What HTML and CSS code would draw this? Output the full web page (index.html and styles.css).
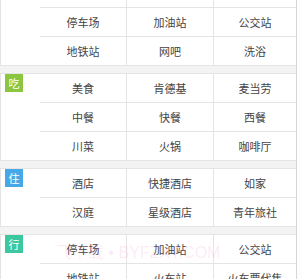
FILE: index.html
```html
<!DOCTYPE html>
<html lang="zh">
<head>
<meta charset="utf-8">
<link rel="stylesheet" href="styles.css">
</head>
<body>
<div class="page">
  <div class="list">
    <div class="section">
      <div class="label"></div>
      <div class="grid">
        <div class="cell"></div><div class="cell"></div><div class="cell"></div>
        <div class="cell">停车场</div><div class="cell">加油站</div><div class="cell">公交站</div>
        <div class="cell">地铁站</div><div class="cell">网吧</div><div class="cell">洗浴</div>
      </div>
    </div>
    <div class="section">
      <div class="label"><span class="badge badge-eat">吃</span></div>
      <div class="grid">
        <div class="cell">美食</div><div class="cell">肯德基</div><div class="cell">麦当劳</div>
        <div class="cell">中餐</div><div class="cell">快餐</div><div class="cell">西餐</div>
        <div class="cell">川菜</div><div class="cell">火锅</div><div class="cell">咖啡厅</div>
      </div>
    </div>
    <div class="section">
      <div class="label"><span class="badge badge-stay">住</span></div>
      <div class="grid">
        <div class="cell">酒店</div><div class="cell">快捷酒店</div><div class="cell">如家</div>
        <div class="cell">汉庭</div><div class="cell">星级酒店</div><div class="cell">青年旅社</div>
      </div>
    </div>
    <div class="section">
      <div class="label"><span class="badge badge-go">行</span></div>
      <div class="grid">
        <div class="cell">停车场</div><div class="cell">加油站</div><div class="cell">公交站</div>
        <div class="cell">地铁站</div><div class="cell">火车站</div><div class="cell">火车票代售</div>
      </div>
    </div>
  </div>
  <div class="watermark">飞下载 • BYFZXY.COM</div>
</div>
</body>
</html>
```

FILE: styles.css
```css
html, body {
  margin: 0;
  padding: 0;
  background: #fdfdfd;
}
body {
  font-family: "Noto Sans CJK SC", "Microsoft YaHei", sans-serif;
  font-size: 11px;
  color: #444;
}
.page {
  position: relative;
  width: 296px;
  height: 279px;
  overflow: hidden;
  background: #f3f3f3;
  border-right: 1px solid #d6d6d6;
}
.list {
  margin-top: -22px;
}
.section {
  display: flex;
  background: #fff;
  border: 1px solid #e4e4e4;
  border-right: none;
  margin-bottom: 7px;
}
.label {
  width: 39px;
  padding-left: 4px;
  box-sizing: border-box;
}
.badge {
  display: flex;
  align-items: center;
  justify-content: center;
  width: 18px;
  height: 18px;
  color: #fff;
  font-size: 11px;
  line-height: 1;
}
.badge-eat { background: #8cc63e; }
.badge-stay { background: #46a8e6; }
.badge-go { background: #3dc79e; }
.grid {
  flex: 1;
  display: grid;
  grid-template-columns: 87px 87px 1fr;
}
.cell {
  height: 28px;
  display: flex;
  align-items: center;
  justify-content: center;
  border-bottom: 1px solid #e4e4e4;
  border-right: 1px solid #e4e4e4;
  white-space: nowrap;
}
.cell:nth-child(3n) {
  border-right: none;
}
.cell:nth-last-child(-n+3) {
  border-bottom: none;
}
.watermark {
  position: absolute;
  left: 56px;
  top: 239px;
  font-family: "Liberation Sans", "Noto Sans CJK SC", sans-serif;
  font-size: 16px;
  color: rgba(236, 120, 200, 0.16);
  white-space: nowrap;
  pointer-events: none;
}
```
